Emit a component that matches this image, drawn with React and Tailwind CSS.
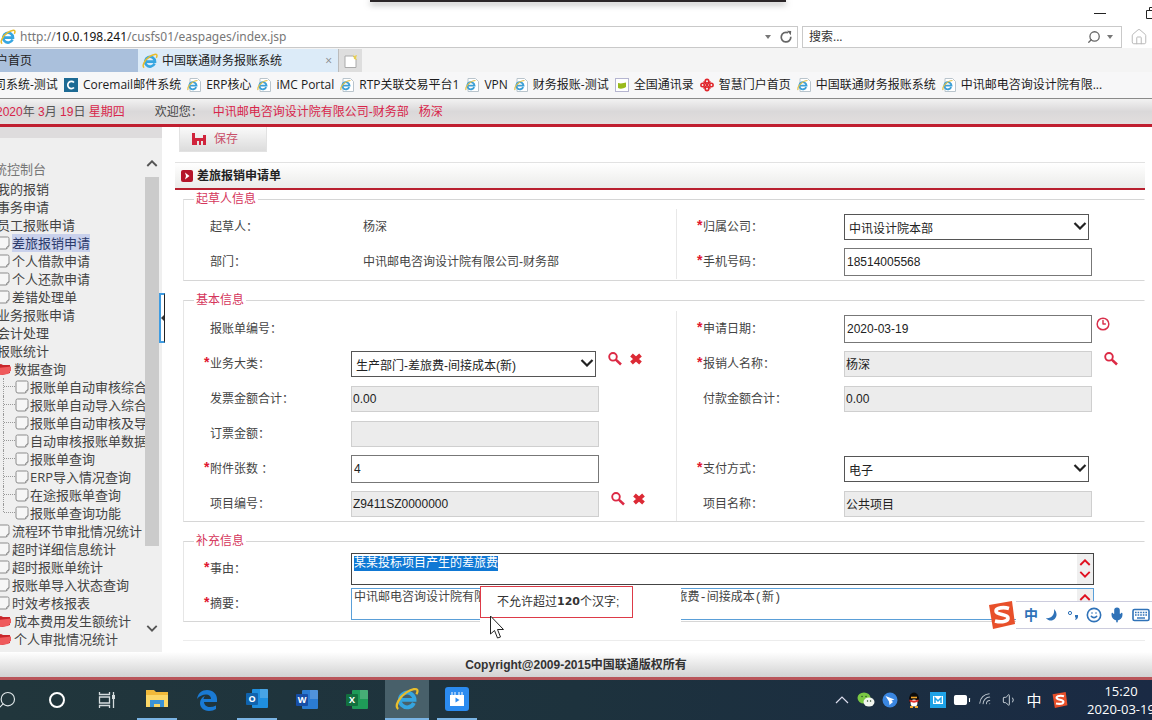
import React, { useEffect, useRef } from "react";
import {
  Battery,
  Clock3,
  Home,
  Mic,
  Search,
  Smile,
  Volume1,
  Wifi,
} from "lucide-react";

const favorites = [
  { icon: "mail", label: "Coremail邮件系统" },
  { icon: "ie", label: "ERP核心" },
  { icon: "ie", label: "iMC Portal" },
  { icon: "ie", label: "RTP关联交易平台1" },
  { icon: "ie", label: "VPN" },
  { icon: "ie", label: "财务报账-测试" },
  { icon: "book", label: "全国通讯录" },
  { icon: "unicom", label: "智慧门户首页" },
  { icon: "ie", label: "中国联通财务报账系统" },
  { icon: "ie", label: "中讯邮电咨询设计院有限..." },
];

const tree = [
  { label: "我的报销", level: 0 },
  { label: "事务申请", level: 0 },
  { label: "员工报账申请", level: 0 },
  { label: "差旅报销申请", level: 1, active: true },
  { label: "个人借款申请", level: 1 },
  { label: "个人还款申请", level: 1 },
  { label: "差错处理单", level: 1 },
  { label: "业务报账申请", level: 0 },
  { label: "会计处理", level: 0 },
  { label: "报账统计", level: 0 },
  { label: "数据查询", level: 1, folder: true },
  { label: "报账单自动审核综合", level: 2 },
  { label: "报账单自动导入综合", level: 2 },
  { label: "报账单自动审核及导", level: 2 },
  { label: "自动审核报账单数据", level: 2 },
  { label: "报账单查询", level: 2 },
  { label: "ERP导入情况查询", level: 2 },
  { label: "在途报账单查询", level: 2 },
  { label: "报账单查询功能", level: 2, last: true },
  { label: "流程环节审批情况统计", level: 1 },
  { label: "超时详细信息统计", level: 1 },
  { label: "超时报账单统计", level: 1 },
  { label: "报账单导入状态查询", level: 1 },
  { label: "时效考核报表", level: 1 },
  { label: "成本费用发生额统计", level: 1, folder: true },
  { label: "个人审批情况统计", level: 1, folder: true },
];

const IEIcon = ({ className }) => (
  <svg viewBox="0 0 16 16" className={className} fill="none">
    <path
      d="M12.6 10.6A4.9 4.9 0 1 1 13 8.6H4.6"
      stroke="#35a5e0"
      strokeWidth="2.6"
    />
    <path
      d="M2.2 14.6C-.6 13 3 6.500 7.600 3.600 11 1.400 15 .4 15 2.600c0 .8-.3 1.500-.7 2.200"
      stroke="#e9bd2c"
      strokeWidth="1.500"
    />
  </svg>
);

const PageIEIcon = () => (
  <svg viewBox="0 0 14 14" className="size-3.5 shrink-0" fill="none">
    <path d="M3 .5h7.500l3 3v10H3z" fill="#fff" stroke="#b9c4cc" />
    <path d="M9.200 9.200A3.600 3.600 0 1 1 9.500 7.600H3" stroke="#3c9fd6" strokeWidth="1.900" />
    <path d="M1 12C0 9 5 2.500 10.500 2.500" stroke="#e2c04a" strokeWidth="1.200" />
  </svg>
);

const FavIcon = ({ type }) => {
  if (type === "mail") {
    return (
      <svg viewBox="0 0 14 14" className="size-3.5 shrink-0">
        <rect width="14" height="14" fill="#1d6a94" />
        <path d="M10 4.500A3.600 3.600 0 1 0 10 9.500" fill="none" stroke="#fff" strokeWidth="1.700" />
      </svg>
    );
  }
  if (type === "book") {
    return (
      <svg viewBox="0 0 14 14" className="size-3.5 shrink-0">
        <rect x=".5" y=".5" width="13" height="13" fill="#fff" stroke="#b5b5d0" />
        <path d="M3 5c3 1 6 0 8-.5V9c-3 2-6 2-8 1z" fill="#9aba1c" />
      </svg>
    );
  }
  if (type === "unicom") {
    return (
      <svg viewBox="0 0 14 14" className="size-3.5 shrink-0" fill="none" stroke="#e0262c" strokeWidth="1.600">
        <circle cx="7" cy="3.200" r="1.800" />
        <circle cx="7" cy="10.800" r="1.800" />
        <circle cx="2.600" cy="7" r="1.700" />
        <circle cx="11.400" cy="7" r="1.700" />
        <path d="M3.500 3.500l7 7M10.500 3.500l-7 7" />
      </svg>
    );
  }
  return <PageIEIcon />;
};

const LeafIcon = () => (
  <svg viewBox="0 0 14 14" className="size-3.5 shrink-0">
    <path
      d="M2.500 1h9a1.500 1.500 0 0 1 1.500 1.500V10l-2.500 3H3a2 2 0 0 1-2-2V2.500A1.500 1.500 0 0 1 2.500 1z"
      fill="#f6f6f6"
      stroke="#8b8b8b"
    />
    <path d="M13 9.500c-1 1-2.500.5-2.500 3.500" fill="#ccc" stroke="#8b8b8b" />
  </svg>
);

const FolderIcon = () => (
  <svg viewBox="0 0 16 14" className="h-3.5 w-4 shrink-0">
    <path d="M1 3l4-1 2 1 7 0v8l-8 2-5-2z" fill="#c8262b" />
    <path d="M1 6l14-1.500v4L12 12l-7 1-4-1z" fill="#ef5a5c" />
  </svg>
);

const Chevron = ({ className, up }) => (
  <svg viewBox="0 0 14 8" className={className} fill="none" stroke="currentColor" strokeWidth="2.200">
    <path d={up ? "M1.500 7L7 1.500 12.500 7" : "M1.500 1L7 6.500 12.500 1"} />
  </svg>
);

const SearchButton = () => (
  <button type="button" aria-label="查找" className="text-[#dc2a45]">
    <svg viewBox="0 0 14 14" className="size-3.5" fill="none" stroke="currentColor">
      <circle cx="5" cy="4.800" r="3.800" strokeWidth="1.900" />
      <path d="M7.800 7.600L13 12.500" strokeWidth="2.600" />
    </svg>
  </button>
);

const ClearButton = () => (
  <button type="button" aria-label="清除" className="text-[#dc2a35]">
    <svg viewBox="0 0 12 12" className="size-3" stroke="currentColor" strokeWidth="4">
      <path d="M1.500 2l9 8M10.500 2l-9 8" />
    </svg>
  </button>
);

const BrowserBar = () => (
  <header className="shrink-0 font-['Open_Sans','Noto_Sans_CJK_SC',sans-serif]">
    <div className="relative flex h-[26px] items-center justify-end">
      <div className="absolute top-0 left-[370px] h-0.5 w-[416px] bg-[#2b2628] shadow-[0_2px_6px_#777]" />
      <button type="button" aria-label="最小化" className="mr-10 h-px w-3 bg-[#222]" />
      <button type="button" aria-label="还原" className="-mr-1.5">
        <svg viewBox="0 0 12 12" className="size-3" fill="none" stroke="#222">
          <path d="M.5 3.500h8v8h-8zM3.500 3V.5h8v8H9" />
        </svg>
      </button>
    </div>

    <div className="flex h-[22px]">
      <div className="flex flex-1 items-center border-y border-r border-[#c9c9c9]">
        <IEIcon className="mr-1 size-4" />
        <div role="textbox" aria-label="地址" className="flex-1 font-['Noto_Sans',sans-serif] text-xs text-[#777]">
          http://<span className="text-[#111]">10.0.198.241</span>/cusfs01/easpages/index.jsp
        </div>
        <button type="button" aria-label="地址列表" className="mr-2 border-x-3 border-t-4 border-x-transparent border-t-[#777]" />
        <button type="button" aria-label="刷新" className="mr-1">
          <svg viewBox="0 0 14 14" className="size-3.5" fill="none" stroke="#666" strokeWidth="1.700">
            <path d="M11.800 6.800A4.800 4.800 0 1 1 9 2.800" />
            <path d="M8 .8l4.200.2-.4 4.200z" fill="#666" stroke="none" />
          </svg>
        </button>
      </div>
      <div className="ml-1 flex w-[320px] items-center border border-[#c9c9c9] pr-2 pl-1.5">
        <input
          aria-label="搜索"
          placeholder="搜索..."
          className="min-w-0 flex-1 text-xs outline-none placeholder:text-[#333]"
        />
        <Search className="mr-1.5 size-3.5 -scale-x-100 text-[#666]" strokeWidth={2.2} />
        <span className="border-x-3 border-t-4 border-x-transparent border-t-[#777]" />
      </div>
      <button type="button" aria-label="主页" className="mr-1 ml-2">
        <Home className="size-[18px] text-[#b8b8b8]" strokeWidth={1.3} />
      </button>
    </div>

    <div className="flex h-6 bg-[#f4f4f4] pt-px text-xs text-[#222]">
      <button type="button" className="flex w-[138px] items-center bg-[#aac0dc]">
        <span className="-ml-1">户首页</span>
      </button>
      <div className="flex w-[200px] items-center bg-[#dcebf8] pl-1">
        <IEIcon className="mr-1 size-4" />
        <button type="button">中国联通财务报账系统</button>
        <button type="button" aria-label="关闭标签页" className="mr-1.5 ml-auto text-[#888]">
          ×
        </button>
      </div>
      <button type="button" aria-label="新建标签页" className="flex w-[24px] items-center justify-center border-l border-[#bbb] bg-[#dedede]">
        <svg viewBox="0 0 14 14" className="size-3.5">
          <path d="M1 2h8l3 3v8.500H1z" fill="#fff" stroke="#aaa" />
          <path d="M9 0l1 2 3-1-1 3 1 2-3-1z" fill="#e8cf52" />
        </svg>
      </button>
    </div>

    <nav className="flex h-[27px] items-center gap-1.5 border-b border-[#8a8a8a] bg-[#f7f7f8] text-xs whitespace-nowrap text-[#1c1c1c]">
      <a href="#fav" className="-ml-1.5">司系统-测试</a>
      {favorites.map((item) => (
        <a href="#fav" key={item.label} className="flex items-center gap-[5px]">
          <FavIcon type={item.icon} />
          {item.label}
        </a>
      ))}
    </nav>
  </header>
);

const TreeItem = ({ item }) => (
  <li className="flex h-[18px] items-center whitespace-nowrap">
    {item.level === 0 && <span className="-ml-[3px]" />}
    {item.level === 1 && !item.folder && (
      <span className="-ml-1 pr-0.5">
        <LeafIcon />
      </span>
    )}
    {item.folder && (
      <span className="-ml-1 pr-0.5">
        <FolderIcon />
      </span>
    )}
    {item.level === 2 && (
      <>
        <span className="ml-[3px] flex h-full w-3 shrink-0 flex-col border-l border-dotted border-[#999]">
          <span className="h-1/2 border-b border-dotted border-[#999]" />
          {item.last && <span className="-ml-px h-1/2 w-px bg-[#efefef]" />}
        </span>
        <LeafIcon />
        <span className="w-px shrink-0" />
      </>
    )}
    <a href="#menu" className={item.active ? "bg-[#c9d1ec] text-[#2b3a6b]" : ""}>
      {item.label}
    </a>
  </li>
);

const Sidebar = () => (
  <aside className="relative flex w-[162px] shrink-0 flex-col bg-[#efefef] font-['Open_Sans','Noto_Sans_CJK_SC',sans-serif] text-[13px] leading-[18px] text-[#444]">
    <div className="h-[11px] shrink-0 bg-[#dedcdd]" />
    <div className="flex min-h-0 flex-1">
      <div className="min-w-0 flex-1 overflow-hidden pt-[22px]">
        <p className="-ml-1.5 h-5 text-[#777]">统控制台</p>
        <ul>
          {tree.map((item) => (
            <TreeItem key={item.label} item={item} />
          ))}
        </ul>
      </div>
      <div className="mr-[3px] flex w-[14px] flex-col items-center pt-[22px] pb-5 text-[#555]">
        <Chevron up className="w-3 shrink-0" />
        <div className="mt-2.5 h-[369px] w-full bg-[#cbcbcb]" />
        <Chevron className="mt-auto w-3 shrink-0" />
      </div>
    </div>
    <button
      type="button"
      aria-label="收起菜单"
      className="absolute top-[166px] -right-[3px] flex h-[50px] w-1.5 items-center border-2 border-r border-[#3f9be0] border-r-[#222] bg-white"
    >
      <span className="border-y-3 border-r-3 border-y-transparent border-r-[#333]" />
    </button>
  </aside>
);

const Row = ({ id, label, required, children }) => (
  <div className="flex h-[35px] items-center">
    <label htmlFor={id} className="flex w-[167px] shrink-0 pl-5 whitespace-nowrap">
      <span className="-mt-1 w-1.5 shrink-0 text-sm font-bold text-[#e0172f]">{required ? "*" : ""}</span>
      {label}
    </label>
    {children}
  </div>
);

const TextField = ({ id, value, readOnly }) => (
  <input
    id={id}
    defaultValue={value}
    readOnly={readOnly}
    className={
      readOnly
        ? "h-[26px] w-[248px] min-w-0 border border-[#cfcfcf] bg-[#ececec] pl-px text-[#222] outline-none"
        : "h-7 w-[248px] min-w-0 border border-[#777] bg-white pl-0.5 text-[#222] outline-none"
    }
  />
);

const SelectField = ({ id, options }) => (
  <div className="relative w-[245px] min-w-0 text-[#222]">
    <select id={id} className="block h-[26px] w-full appearance-none border border-[#555] bg-white pt-1 pl-1 outline-none">
      {options.map((option) => (
        <option key={option}>{option}</option>
      ))}
    </select>
    <Chevron className="pointer-events-none absolute top-2 right-0.5 w-3.5" />
  </div>
);

const Section = ({ title, children }) => (
  <fieldset className="mt-2.5 border border-[#d6d6d6] border-l-[#e6e6e6] border-r-transparent first:mt-0">
    <legend className="ml-2.5 px-0.5 leading-[18px] text-[#d5365c]">{title}</legend>
    {children}
  </fieldset>
);

const ScrollArrows = () => (
  <div className="flex w-4 flex-col items-center justify-evenly bg-[#efefef] text-[#e01020]">
    <Chevron up className="w-3" />
    <Chevron className="w-3" />
  </div>
);

const ExpenseForm = () => {
  const reasonRef = useRef(null);

  useEffect(() => {
    reasonRef.current.focus();
    reasonRef.current.select();
  }, []);

  return (
    <form className="text-[#444]">
      <Section title="起草人信息">
        <div className="grid grid-cols-[492fr_468fr] py-px">
          <div>
            <Row label="起草人：">
              <span className="pl-3">杨深</span>
            </Row>
            <Row label="部门：">
              <span className="pl-3 whitespace-nowrap">中讯邮电咨询设计院有限公司-财务部</span>
            </Row>
          </div>
          <div className="border-l border-[#e8e8e8]">
            <Row id="company" label="归属公司：" required>
              <SelectField id="company" options={["中讯设计院本部"]} />
            </Row>
            <Row id="phone" label="手机号码：" required>
              <TextField id="phone" value="18514005568" />
            </Row>
          </div>
        </div>
      </Section>

      <Section title="基本信息">
        <div className="grid grid-cols-[492fr_468fr] pt-0.5">
          <div>
            <Row label="报账单编号：" />
            <Row id="category" label="业务大类：" required>
              <SelectField id="category" options={["生产部门-差旅费-间接成本(新)"]} />
              <div className="ml-3 flex items-center gap-2 pb-2.5">
                <SearchButton />
                <ClearButton />
              </div>
            </Row>
            <Row id="invoice" label="发票金额合计：">
              <TextField id="invoice" value="0.00" readOnly />
            </Row>
            <Row id="ticket" label="订票金额：">
              <TextField id="ticket" value="" readOnly />
            </Row>
            <Row id="attachments" label="附件张数 ：" required>
              <TextField id="attachments" value="4" />
            </Row>
            <Row id="projectNo" label="项目编号：">
              <TextField id="projectNo" value="Z9411SZ0000000" readOnly />
              <div className="ml-3 flex items-center gap-2 pb-2.5">
                <SearchButton />
                <ClearButton />
              </div>
            </Row>
          </div>
          <div className="border-l border-[#e8e8e8]">
            <Row id="date" label="申请日期：" required>
              <TextField id="date" value="2020-03-19" />
              <button type="button" aria-label="选择日期" className="ml-1 pb-2.5 text-[#d9304c]">
                <Clock3 className="size-3.5" strokeWidth={2.5} />
              </button>
            </Row>
            <Row id="person" label="报销人名称：" required>
              <TextField id="person" value="杨深" readOnly />
              <div className="ml-3 flex pb-2.5">
                <SearchButton />
              </div>
            </Row>
            <Row id="payment" label="付款金额合计：">
              <TextField id="payment" value="0.00" readOnly />
            </Row>
            <div className="h-[35px]" />
            <Row id="payType" label="支付方式：" required>
              <SelectField id="payType" options={["电子"]} />
            </Row>
            <Row id="projectName" label="项目名称：">
              <TextField id="projectName" value="公共项目" readOnly />
            </Row>
          </div>
        </div>
      </Section>

      <Section title="补充信息">
        <div className="relative pt-px">
          <Row id="reason" label="事由：" required>
            <div className="mr-[50px] flex h-8 flex-1 border border-[#444]">
              <textarea
                id="reason"
                ref={reasonRef}
                defaultValue="某某投标项目产生的差旅费"
                className="flex-1 resize-none overflow-hidden pt-0.5 pl-0.5 leading-[15px] outline-none selection:bg-[#0f78d4] selection:text-white"
              />
              <ScrollArrows />
            </div>
          </Row>
          <Row id="summary" label="摘要：" required>
            <div className="mr-[50px] flex h-8 flex-1 border border-[#5a9fd8]">
              <textarea
                id="summary"
                defaultValue="中讯邮电咨询设计院有限公司-财务部杨深-报销生产部门-差旅费-间接成本(新)"
                className="flex-1 resize-none overflow-hidden pt-0.5 pl-0.5 font-['Liberation_Mono','Noto_Sans_CJK_SC',monospace] leading-[15px] outline-none"
              />
              <ScrollArrows />
            </div>
          </Row>
          <div className="absolute top-9 left-[296px] h-[37px] w-[201px] bg-white">
            <p className="flex h-8 w-[153px] items-center border border-[#dd3a48] pl-4 text-[#333]">
              不允许超过<b className="font-['DejaVu_Sans',sans-serif] text-[11px]">120</b>个汉字;
            </p>
          </div>
        </div>
      </Section>
    </form>
  );
};

const SogouIcon = ({ className }) => (
  <svg viewBox="0 0 28 28" className={className}>
    <path d="M1 4L24 0l3 23-22 5z" fill="#e8502a" />
    <path
      d="M21 7.500C16 6 8 6.500 8 10c0 4.500 12 2.500 12 7 0 4-7 4.500-13 3"
      fill="none"
      stroke="#fff"
      strokeWidth="3.600"
    />
  </svg>
);

const ImeBar = () => (
  <div className="absolute right-0 bottom-[91px] flex h-7 w-[164px] items-center text-[#2f72b8]">
    <SogouIcon className="size-7 shrink-0" />
    <div className="flex h-7 flex-1 items-center justify-between border-y border-[#ccd] bg-white pr-0.5 pl-2">
      <span className="text-sm font-bold">中</span>
      <svg viewBox="0 0 14 14" className="size-3.5" fill="currentColor">
        <path d="M9 1c7 7-2 16-8 9 5 1 9-3 8-9z" />
      </svg>
      <svg viewBox="0 0 14 14" className="size-3.5">
        <circle cx="4" cy="5" r="1.600" fill="none" stroke="currentColor" />
        <path d="M9 7h3c.5 3-1 4.500-3 5l1-2.500H9z" fill="currentColor" />
      </svg>
      <Smile className="size-4" strokeWidth={2.4} />
      <Mic className="size-4" fill="currentColor" strokeWidth={2.4} />
      <svg viewBox="0 0 18 14" className="h-3.5 w-[18px]" fill="none" stroke="currentColor">
        <rect x="1" y="1.500" width="16" height="11" rx="1.500" strokeWidth="1.600" />
        <path d="M3 4.500h12M3 7h12" strokeWidth="1.600" strokeDasharray="1.600 1" />
        <path d="M5 10h8" strokeWidth="1.400" />
      </svg>
    </div>
  </div>
);

const OfficeIcon = ({ letter, back, front }) => (
  <svg viewBox="0 0 24 22" className="h-[22px] w-6">
    <rect x="7" y="1" width="16" height="19" rx="1" fill={back} />
    <rect x="15" y="1" width="8" height="9" fill="#fff" opacity=".18" />
    <rect x="1" y="5" width="12" height="12" rx="1" fill={front} />
    <text x="7" y="14" textAnchor="middle" fontSize="9" fontWeight="bold" fontFamily="Open Sans" fill="#fff">
      {letter}
    </text>
  </svg>
);

const tasks = [
  {
    name: "搜索",
    icon: <Search className="size-5 -scale-x-100 text-[#dfe6e8]" strokeWidth={1.4} />,
  },
  {
    name: "Cortana",
    icon: <span className="size-4 rounded-full border-2 border-white" />,
  },
  {
    name: "任务视图",
    icon: (
      <svg viewBox="0 0 18 18" className="size-[18px]" fill="none" stroke="#d5dcde" strokeWidth="1.300">
        <path d="M1.500 1v2.500h10V1M1.500 17v-2.500h10V17M1.500 6h10v6h-10zM15.500 1v16" />
        <path d="M15.500 4v4" strokeWidth="3" />
      </svg>
    ),
  },
  {
    name: "文件资源管理器",
    open: true,
    icon: (
      <svg viewBox="0 0 22 20" className="h-5 w-[22px]">
        <path d="M0 1h8l2 2h12v15H0z" fill="#f0b93a" />
        <path d="M0 6h22v12H0z" fill="#fbd768" />
        <path d="M4 18v-7h14v7h-4v-3H8v3z" fill="#3b93d8" />
      </svg>
    ),
  },
  {
    name: "Edge",
    icon: (
      <svg viewBox="0 0 22 22" className="size-[22px]">
        <path
          d="M1 10C2 4 6 1 11 1c6 0 10 4 10 9v3H8c0 3 3 5 6 5 2 0 4-.5 6-1.500V20c-2 1-4 2-7 2-6 0-9-4-9-8 0-3 2-6 5-7-1 1-1.500 2-1.500 3H15c0-3-2-4.500-5-4.500S3 7 1 10z"
          fill="#1a7ad4"
        />
      </svg>
    ),
  },
  { name: "Outlook", open: true, icon: <OfficeIcon letter="O" back="#1f8fdf" front="#0f63ad" /> },
  { name: "Word", icon: <OfficeIcon letter="W" back="#2b7cd3" front="#174ea6" /> },
  { name: "Excel", icon: <OfficeIcon letter="X" back="#1f9b58" front="#12703e" /> },
  { name: "Internet Explorer", open: true, active: true, icon: <IEIcon className="size-6" /> },
  {
    name: "视频",
    open: true,
    icon: (
      <svg viewBox="0 0 24 24" className="size-6">
        <rect width="24" height="24" rx="3" fill="#2b8bf0" />
        <path d="M5 8h14v11H5z" fill="#fff" />
        <path d="M7 5v3M10 5v3M14 5v3M17 5v3" stroke="#fff" />
        <path d="M10.500 10.500v5l4-2.500z" fill="#2b8bf0" />
      </svg>
    ),
  },
];

const Taskbar = () => (
  <footer className="flex h-10 shrink-0 overflow-hidden bg-gradient-to-r from-[#21363c] via-[#1d323d] to-[#1a2a44] font-['Open_Sans','Noto_Sans_CJK_SC',sans-serif] text-white">
    <div className="-ml-[18px] flex">
      {tasks.map((task) => (
        <button
          key={task.name}
          type="button"
          aria-label={task.name}
          className="flex w-[50px] flex-col items-center"
        >
          <span
            className={
              task.active
                ? "flex w-11 flex-1 items-center justify-center bg-[#48606a]"
                : "flex w-11 flex-1 items-center justify-center"
            }
          >
            {task.icon}
          </span>
          {task.open && <span className={task.active ? "h-0.5 w-11 bg-[#7ab4e4]" : "h-0.5 w-10 bg-[#7ab4e4]"} />}
        </button>
      ))}
    </div>

    <div className="ml-auto flex items-center">
      <span className="flex w-6 justify-center">
        <svg viewBox="0 0 14 8" className="w-3.5" fill="none" stroke="#dde" strokeWidth="1.200">
          <path d="M1 7l6-6 6 6" />
        </svg>
      </span>
      <span className="flex w-6 justify-center">
        <svg viewBox="0 0 18 16" className="w-[18px]">
          <ellipse cx="7" cy="6" rx="6.500" ry="5.500" fill="#7ac943" />
          <ellipse cx="12" cy="10" rx="5.500" ry="4.500" fill="#f2f5ef" />
          <path d="M5 4.500h.1M9 4.500h.1M10.500 9h.1M13.500 9h.1" stroke="#2b4a2b" strokeWidth="1.400" strokeLinecap="round" />
        </svg>
      </span>
      <span className="flex w-6 justify-center">
        <svg viewBox="0 0 16 16" className="size-4">
          <circle cx="8" cy="8" r="7.500" fill="#3a86e0" />
          <path d="M3.500 4l9 3.500-3 1L11 10l-3.500 3-.5-3.500z" fill="#fff" />
        </svg>
      </span>
      <span className="flex w-6 justify-center">
        <svg viewBox="0 0 14 16" className="h-4 w-3.5">
          <ellipse cx="7" cy="7.500" rx="5" ry="7" fill="#0c0c0c" />
          <ellipse cx="7" cy="11" rx="3.500" ry="3.500" fill="#fff" />
          <path d="M2.500 7.500c3 1.500 6 1.500 9 0v2c-3 1.500-6 1.500-9 0z" fill="#e2312d" />
          <path d="M4 5.500h6" stroke="#f3a62a" strokeWidth="1.600" />
          <path d="M3 15h3M8 15h3" stroke="#f3a62a" strokeWidth="1.800" />
        </svg>
      </span>
      <span className="flex w-6 justify-center">
        <svg viewBox="0 0 16 16" className="size-4">
          <rect width="16" height="16" fill="#1fa2e6" />
          <path d="M3 4h10v8H3z" fill="#fff" />
          <path d="M5 11V6l3 3 3-3v5" fill="none" stroke="#1fa2e6" strokeWidth="1.500" />
        </svg>
      </span>
      <span className="flex w-6 justify-center">
        <Battery className="size-[18px]" fill="currentColor" strokeWidth={1.5} />
      </span>
      <span className="flex w-6 justify-center">
        <Wifi className="size-4 -rotate-45 text-[#b9c3cc]" strokeWidth={1.5} />
      </span>
      <span className="flex w-6 justify-center">
        <Volume1 className="size-4 text-[#c9d2d9]" strokeWidth={1.5} />
      </span>
      <span className="flex w-6 justify-center text-[15px]">中</span>
      <span className="flex w-7 justify-center">
        <SogouIcon className="size-4" />
      </span>
      <time className="-mr-1 ml-3 flex w-[70px] flex-col items-center text-[13px] leading-[18px] whitespace-nowrap">
        <span>15:20</span>
        <span>2020-03-19</span>
      </time>
    </div>
  </footer>
);

const App = () => {
  return (
    <div className="relative flex h-screen flex-col overflow-hidden bg-white font-['Liberation_Sans','Noto_Sans_CJK_SC',sans-serif] text-xs">
      <BrowserBar />

      <div className="flex h-7 shrink-0 items-center border-b-3 border-[#c01f30] bg-gradient-to-b from-[#f2f2f2] via-[#dad8d9] to-[#e2dede] whitespace-nowrap text-[#d8254a]">
        <p className="-ml-1">
          2020<span className="text-[#555]">年</span> 3<span className="text-[#555]">月</span> 19
          <span className="text-[#555]">日</span> <span>星期四</span>
        </p>
        <p className="ml-[30px] text-[#444]">欢迎您：</p>
        <p className="ml-2.5">中讯邮电咨询设计院有限公司-财务部</p>
        <p className="ml-2.5">杨深</p>
      </div>

      <div className="flex min-h-0 flex-1">
        <Sidebar />
        <main className="min-w-0 flex-1 pr-[7px] pl-[13px]">
          <button
            type="button"
            className="ml-1 flex h-[25px] w-[88px] items-center gap-2 border border-t-0 border-[#e2e2e2] bg-gradient-to-b from-[#fafafa] to-[#dcdcdc] pl-3 text-[#c9506a]"
          >
            <svg viewBox="0 0 14 12" className="h-3 w-3.5">
              <path d="M0 0h3v5h8V2h3v10h-3V8H9v4H7V8H5v4H0z" fill="#d0243c" />
            </svg>
            保存
          </button>
          <div className="mt-2.5 flex h-7 items-center gap-1 border-t border-b-2 border-t-[#e2e2e2] border-b-[#b8202f] bg-gradient-to-b from-white to-[#ebebe9] pl-1.5">
            <svg viewBox="0 0 12 12" className="size-3">
              <rect width="12" height="12" rx="2" fill="#b5152a" />
              <path d="M4 2.500l4.500 3.500L4 9.500l1-3.500z" fill="#fff" />
            </svg>
            <h1 className="font-bold text-[#222]">差旅报销申请单</h1>
          </div>
          <div className="ml-2 border-b border-[#ececec] pb-[18px]">
            <ExpenseForm />
          </div>
        </main>
      </div>

      <div className="flex h-7 shrink-0 items-center justify-center border-b-3 border-[#b9555a] bg-gradient-to-b from-white to-[#d2d2d2] font-bold text-[#333]">
        Copyright@2009-2015中国联通版权所有
      </div>
      <Taskbar />

      <ImeBar />
      <svg viewBox="0 0 16 26" className="absolute top-[615px] left-[490px] h-[26px] w-4" fill="#fff" stroke="#222">
        <path d="M.5 1v18l4-3.500 3 7.500 3-1-3-7.500h6z" />
      </svg>
    </div>
  );
};

export default App;
